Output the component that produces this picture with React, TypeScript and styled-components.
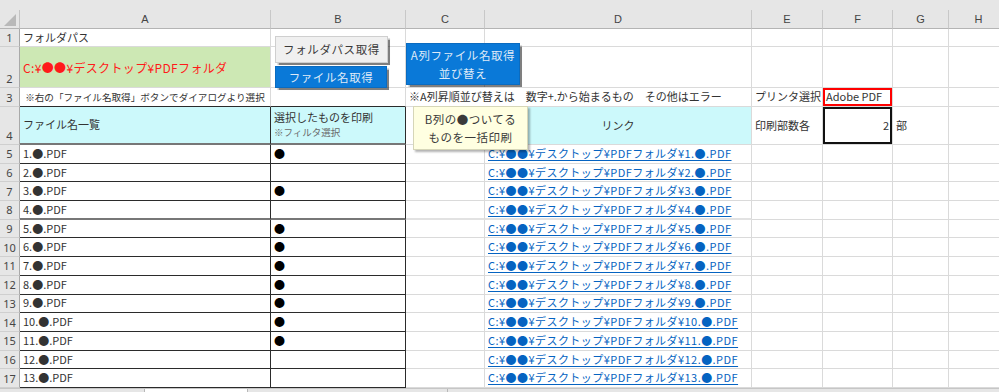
import React from 'react';
import styled, { createGlobalStyle } from 'styled-components';

const GlobalStyle = createGlobalStyle`
  html, body {
    margin: 0;
    padding: 0;
    background: #fff;
    overflow: hidden;
  }
  body {
    font-family: "Noto Sans CJK JP", "Noto Sans", sans-serif;
  }
`;

const grid = '#dadada';
const dark = '#2b2b2b';
const cyan = '#ccf9fb';
const green = '#cde8b4';

const Page = styled.div`
  width: 999px;
  height: 392px;
  overflow: hidden;
  position: relative;
  background: #fff;
`;

const TopStrip = styled.div`
  height: 10px;
  background: #e6e6e6;
`;

const Sheet = styled.div`
  display: grid;
  grid-template-columns: 20px 251px 135px 79px 267px 71px 70px 56px 60px;
  grid-template-rows: 19px 18px 41px 19px 38px repeat(13, 18.7px);
  width: 1009px;
  position: relative;
`;

const Corner = styled.div`
  background: #e6e6e6;
  border-right: 1px solid #c4c4c4;
  border-bottom: 1px solid #b4b4b4;
  position: relative;
  &::after {
    content: '';
    position: absolute;
    right: 3px;
    bottom: 2px;
    border-left: 12px solid transparent;
    border-bottom: 12px solid #b9b9b9;
  }
`;

const ColHead = styled.div`
  background: #e6e6e6;
  border-right: 1px solid #c8c8c8;
  border-bottom: 1px solid #b4b4b4;
  display: flex;
  align-items: center;
  justify-content: center;
  font-family: "Liberation Sans", Arial, sans-serif;
  font-size: 11px;
  color: #444;
`;

const RowHead = styled.div<{ $v?: string }>`
  background: #e6e6e6;
  border-right: 1px solid #a9a9a9;
  border-bottom: 1px solid #cfcfcf;
  display: flex;
  align-items: ${p => p.$v ?? 'center'};
  justify-content: center;
  padding-bottom: ${p => (p.$v === 'flex-end' ? '1px' : '0')};
  font-family: "Noto Sans", sans-serif;
  font-size: 11px;
  color: #454545;
`;

interface CellProps {
  $bg?: string;
  $rb?: string;
  $bb?: string;
  $bw?: number;
  $h?: string;
  $frame?: string;
  $fw?: number;
  $size?: number;
  $color?: string;
  $ls?: number;
}

const Cell = styled.div<CellProps>`
  display: flex;
  flex-direction: column;
  justify-content: center;
  align-items: ${p => p.$h ?? 'flex-start'};
  padding: 0 3px;
  background: ${p => p.$bg ?? 'transparent'};
  border-right: 1px solid ${p => p.$rb ?? grid};
  border-bottom: ${p => p.$bw ?? 1}px solid ${p => p.$bb ?? grid};
  box-shadow: ${p => (p.$frame ? `inset 0 0 0 ${p.$fw ?? 2}px ${p.$frame}` : 'none')};
  white-space: nowrap;
  font-size: ${p => p.$size ?? 11}px;
  letter-spacing: ${p => p.$ls ?? 0}px;
  line-height: 1.25;
  color: ${p => p.$color ?? '#333'};
  min-width: 0;
`;

const SubNote = styled.span`
  font-size: 9.5px;
  color: #6a6a6a;
  margin-top: 3px;
`;

const Link = styled.a`
  color: #0563c1;
  text-decoration: underline;
  text-underline-offset: 2px;
  font-size: 11px;
  letter-spacing: 0.45px;
`;

const Bullet = styled.span`
  font-size: 11px;
  color: #000;
`;

const ShapeButton = styled.div<{ $variant: 'gray' | 'blue' }>`
  position: absolute;
  display: flex;
  align-items: center;
  justify-content: center;
  text-align: center;
  font-size: 11.5px;
  line-height: 1.6;
  letter-spacing: 0.6px;
  background: ${p => (p.$variant === 'blue' ? '#0a79d8' : '#f0f0f0')};
  color: ${p => (p.$variant === 'blue' ? '#dfeaf7' : '#3a3a3a')};
  border: 1px solid ${p => (p.$variant === 'blue' ? '#0a6bc0' : '#cfcfcf')};
  box-shadow: 1.5px 1.5px 1px rgba(0, 0, 0, 0.5);
  box-sizing: border-box;
`;

const Note = styled.div`
  position: absolute;
  left: 413px;
  top: 96px;
  width: 115px;
  height: 44px;
  box-sizing: border-box;
  background: #ffffe1;
  border: 1px solid #d6d6b8;
  box-shadow: 2px 2px 2px rgba(0, 0, 0, 0.3);
  display: flex;
  align-items: center;
  justify-content: center;
  text-align: center;
  font-size: 11.5px;
  line-height: 1.6;
  letter-spacing: 0.5px;
  color: #3a3a3a;
`;

const TabBar = styled.div`
  display: flex;
  height: 20px;
  background: #e6e6e6;
  border-top: 1px solid #c6c6c6;
`;

const Tab = styled.div<{ $w: number; $active?: boolean }>`
  width: ${p => p.$w}px;
  background: ${p => (p.$active ? '#fff' : '#e6e6e6')};
  border-right: 1px solid #b8b8b8;
  font-size: 11px;
  color: #2a7a3a;
  padding-left: 8px;
  box-sizing: border-box;
`;

const cols = ['A', 'B', 'C', 'D', 'E', 'F', 'G', 'H'];
const marked = [1, 3, 5, 6, 7, 8, 9, 10, 11];
const folder = 'C:¥●●¥デスクトップ¥PDFフォルダ';

const Blanks: React.FC<{ from: number; rowKey: string }> = ({ from, rowKey }) => (
  <>
    {cols.slice(from).map(c => (
      <Cell key={rowKey + c} />
    ))}
  </>
);

export default function App() {
  const files = Array.from({ length: 13 }, (_, i) => i + 1);
  return (
    <Page>
      <GlobalStyle />
      <TopStrip />
      <Sheet>
        <Corner />
        {cols.map(c => (
          <ColHead key={c}>{c}</ColHead>
        ))}

        {/* row 1 */}
        <RowHead>1</RowHead>
        <Cell>フォルダパス</Cell>
        <Blanks from={1} rowKey="r1" />

        {/* row 2 */}
        <RowHead $v="flex-end">2</RowHead>
        <Cell $bg={green} $color="#ff1a1a" $size={12} $ls={0.35}>{folder}</Cell>
        <Blanks from={1} rowKey="r2" />

        {/* row 3 */}
        <RowHead>3</RowHead>
        <Cell $bb={dark} $size={9.6}>&nbsp;※右の「ファイル名取得」ボタンでダイアログより選択</Cell>
        <Cell $bb={dark} />
        <Cell $rb="transparent" $size={11}>※A列昇順並び替えは　数字+.から始まるもの　その他はエラー</Cell>
        <Cell />
        <Cell>プリンタ選択</Cell>
        <Cell $frame="#f00" $fw={2}>Adobe PDF</Cell>
        <Blanks from={6} rowKey="r3" />

        {/* row 4 */}
        <RowHead $v="flex-end">4</RowHead>
        <Cell $bg={cyan} $rb={dark} $bb="#777" $bw={2}>ファイル名一覧</Cell>
        <Cell $bg={cyan} $rb={dark} $bb="#777" $bw={2}>
          <span>選択したものを印刷</span>
          <SubNote>※フィルタ選択</SubNote>
        </Cell>
        <Cell />
        <Cell $bg={cyan} $h="center">リンク</Cell>
        <Cell>印刷部数各</Cell>
        <Cell $frame="#111" $fw={2} $h="flex-end">2</Cell>
        <Cell>部</Cell>
        <Blanks from={7} rowKey="r4" />

        {files.map(n => {
          const thick = n === 4;
          return (
            <React.Fragment key={n}>
              <RowHead>{n + 4}</RowHead>
              <Cell $rb={dark} $bb={thick ? '#777' : dark} $bw={thick ? 2 : 1}>
                <span>{n}.●.PDF</span>
              </Cell>
              <Cell $rb={dark} $bb={thick ? '#777' : dark} $bw={thick ? 2 : 1}>
                {marked.includes(n) ? <Bullet>●</Bullet> : null}
              </Cell>
              <Cell $bb={thick ? '#e2e2e2' : grid} $bw={thick ? 2 : 1} />
              <Cell $bb={thick ? '#e2e2e2' : grid} $bw={thick ? 2 : 1}>
                <Link href="#">{`${folder}¥${n}.●.PDF`}</Link>
              </Cell>
              <Blanks from={4} rowKey={'f' + n} />
            </React.Fragment>
          );
        })}

        <ShapeButton $variant="gray" style={{ left: 275, top: 26, width: 113, height: 27 }}>
          フォルダパス取得
        </ShapeButton>
        <ShapeButton $variant="blue" style={{ left: 275, top: 56, width: 112, height: 22 }}>
          ファイル名取得
        </ShapeButton>
        <ShapeButton $variant="blue" style={{ left: 406, top: 33, width: 114, height: 42 }}>
          A列ファイル名取得
          <br />
          並び替え
        </ShapeButton>
        <Note>
          B列の●ついてる
          <br />
          ものを一括印刷
        </Note>
      </Sheet>
      <TabBar>
        <Tab $w={145} />
        <Tab $w={103} $active />
        <Tab $w={200} />
      </TabBar>
    </Page>
  );
}
